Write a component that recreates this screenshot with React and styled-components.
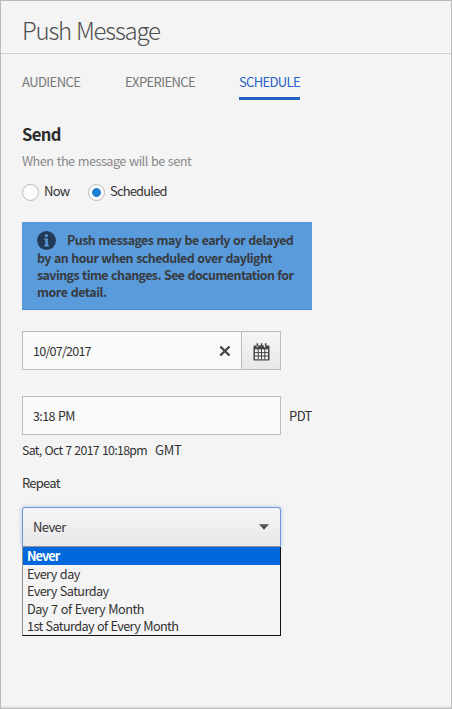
import React from "react";
import styled, { createGlobalStyle } from "styled-components";

const Global = createGlobalStyle`
  *{box-sizing:border-box}
  body{margin:0;background:#f4f4f4;font-family:"Noto Sans CJK SC","Open Sans",sans-serif;font-size:13px;color:#323232}
  svg{display:block;flex:none}
`;
const Panel = styled.main`
  display:flex;flex-direction:column;width:452px;height:709px;
  background:#f4f4f4;border:1px solid #bababa;box-shadow:inset 0 -2px #e5e5e5;
`;
const Header = styled.header`
  height:53px;flex:none;padding:16px 21px 0;border-bottom:1px solid #cfcfcf;
`;
const Text = styled.span`
  letter-spacing:${p => p.$ls || 0}px;
  word-spacing:0.8px;
  white-space:pre;
  ${p => p.$size && `font-size:${p.$size}px;`}
`;
const Title = styled.h1`margin:0;font-size:24px;font-weight:300;line-height:26px;color:#505050;`;
const Tabs = styled.nav`display:flex;padding:19px 21px 0;height:47px;flex:none;`;
const Tab = styled.div`
  width:${p => p.$w}px;margin-right:${p => p.$gap || 0}px;height:27px;line-height:18px;
  color:${p => (p.$active ? "#2561c4" : "#777")};
  border-bottom:${p => (p.$active ? "3px solid #2561c4" : "0")};
`;
const Body = styled.section`display:flex;flex-direction:column;align-items:flex-start;padding:21px 21px 0;`;
const Heading = styled.h2`margin:0;font-size:17px;line-height:24px;font-weight:700;color:#2b2b2b;`;
const Hint = styled.p`margin:6px 0 0;line-height:18px;color:#8a8a8a;`;
const Radios = styled.div`display:flex;margin-top:12px;height:20px;`;
const Radio = styled.label`display:flex;width:${p => p.$w}px;line-height:18px;`;
const Dot = styled.i`
  display:block;flex:none;width:17px;height:17px;margin:2px 5px 0 0;border-radius:50%;border:1px solid #b9b9b9;
  background:${p => (p.$on ? "radial-gradient(circle,#1f7fd1 4px,#fbfbfb 4.8px)" : "#fbfbfb")};
`;
const Banner = styled.div`
  width:290px;height:88px;margin-top:20px;padding:9px 0 0 15px;background:#5a9bdc;border-bottom:1px solid #4885cf;
  font-size:12.4px;line-height:16.8px;font-weight:700;color:#373a3e;
`;
const BannerTop = styled.div`display:flex;height:19px;gap:11px;line-height:18px;`;
const BannerLine = styled.div`height:16.8px;`;
const Box = styled.div`
  display:flex;width:259px;height:39px;border:1px solid #bcbcbc;background:#fafafa;line-height:37px;
`;
const DateBox = styled(Box)`margin-top:21px;`;
const Value = styled.div`flex:1;padding-left:10px;`;
const Clear = styled.div`width:22px;display:flex;align-items:center;`;
const CalendarButton = styled.div`
  width:39px;border-left:1px solid #bcbcbc;background:linear-gradient(#f5f5f5,#e8e8e8);
  display:flex;align-items:center;justify-content:center;padding-top:2px;
`;
const TimeRow = styled.div`display:flex;gap:8px;margin-top:26px;line-height:39px;`;
const Gmt = styled.div`display:flex;gap:8px;margin-top:6px;line-height:18px;`;
const Label = styled.div`margin-top:15px;line-height:18px;`;
const Select = styled.div`
  display:flex;align-items:center;justify-content:space-between;width:259px;height:40px;margin-top:15px;padding:0 11px 0 10px;
  border:1px solid #6f99d8;border-bottom-color:#8f9399;border-radius:3px 3px 0 0;background:linear-gradient(#f5f5f5,#e8e8e8);
  box-shadow:0 0 4px rgba(80,130,220,.45);line-height:18px;padding-bottom:1px;
`;
const List = styled.div`
  position:relative;width:259px;height:89px;background:#f4f4f4;font-size:12.7px;
  border:1px solid;border-color:#8f9399 #111 #111 #909090;border-top:0;
`;
const Option = styled.div`
  height:17.6px;line-height:17.6px;padding-left:4px;
  ${p => p.$on && "background:#0068da;color:#fff;font-weight:700;"}
`;

const InfoIcon = () => (
  <svg width="19" height="19" viewBox="0 0 19 19">
    <circle cx="9.5" cy="9.5" r="9.4" fill="#213a58" />
    <circle cx="9.4" cy="4.6" r="1.5" fill="#5a9bdc" />
    <path d="M7.4 7.4h3.4v6.4h1v1.6H7.3v-1.6h1V9h-.9z" fill="#5a9bdc" />
  </svg>
);
const ClearIcon = () => (
  <svg width="12" height="12" viewBox="0 0 12 12">
    <path d="M1.3 1.5l9.2 9M10.5 1.5l-9.2 9" stroke="#444" strokeWidth="2.4" />
  </svg>
);
const CalendarIcon = () => (
  <svg width="17" height="18" viewBox="0 0 17 18">
    <path d="M1.5 2.5h2v1.8h1.6V2.5h5.8v1.8h1.6V2.5h3q1 0 1 1v13q0 1-1 1h-14q-1 0-1-1v-13q0-1 1-1z" fill="#444" />
    <path d="M3.6.3h1.5v3H3.6zM7.8.3h1.5v3H7.8zM11.9.3h1.5v3h-1.5z" fill="#444" />
    <path d="M2 6.3h13v10H2z" fill="#f3f3f3" />
    <path d="M2 9.6h13M2 13h13M5.2 6v10.5M8.5 6v10.5M11.8 6v10.5" stroke="#444" strokeWidth="1" />
  </svg>
);

const options = [
  ["Never", -0.9],
  ["Every day", -0.6],
  ["Every Saturday", -0.6],
  ["Day 7 of Every Month", -0.5],
  ["1st Saturday of Every Month", -0.63],
];

export default function App() {
  return (
    <>
      <Global />
      <Panel>
        <Header><Title><Text $ls={-1.2}>Push Message</Text></Title></Header>
        <Tabs>
          <Tab $w={60} $gap={43}><Text $ls={-0.55}>AUDIENCE</Text></Tab>
          <Tab $w={71} $gap={43}><Text $ls={-0.6}>EXPERIENCE</Text></Tab>
          <Tab $w={61} $active><Text $ls={-0.65}>SCHEDULE</Text></Tab>
        </Tabs>
        <Body>
          <Heading><Text $ls={-0.65} $size={16.6}>Send</Text></Heading>
          <Hint><Text $size={12.7} $ls={-0.52}>When the message will be sent</Text></Hint>
          <Radios>
            <Radio $w={66}><Dot /><Text $ls={-0.75}>Now</Text></Radio>
            <Radio $w={90}><Dot $on /><Text $size={12.8} $ls={-0.73}>Scheduled</Text></Radio>
          </Radios>
          <Banner>
            <BannerTop>
              <InfoIcon />
              <Text $ls={-0.51}>Push messages may be early or delayed</Text>
            </BannerTop>
            <BannerLine><Text $ls={-0.52}>by an hour when scheduled over daylight</Text></BannerLine>
            <BannerLine><Text $ls={-0.55}>savings time changes. See documentation for</Text></BannerLine>
            <BannerLine><Text $ls={-0.42}>more detail.</Text></BannerLine>
          </Banner>
          <DateBox>
            <Value><Text $size={12.6} $ls={-0.8}>10/07/2017</Text></Value>
            <Clear><ClearIcon /></Clear>
            <CalendarButton><CalendarIcon /></CalendarButton>
          </DateBox>
          <TimeRow>
            <Box><Value><Text $size={12.5} $ls={-0.6}>3:18 PM</Text></Value></Box>
            <Text $ls={-0.6}>PDT</Text>
          </TimeRow>
          <Gmt>
            <Text $size={12.3} $ls={-0.66}>Sat, Oct 7 2017 10:18pm</Text>
            <Text $ls={-0.25}>GMT</Text>
          </Gmt>
          <Label><Text $ls={-0.75}>Repeat</Text></Label>
          <Select>
            <Text $ls={-0.6}>Never</Text>
            <svg width="10" height="6" viewBox="0 0 10 6"><path d="M0 .3h10L5 5.8z" fill="#505050" /></svg>
          </Select>
          <List>
            {options.map(([label, spacing], i) => (
              <Option key={label} $on={i === 0}><Text $ls={spacing}>{label}</Text></Option>
            ))}
          </List>
        </Body>
      </Panel>
    </>
  );
}
